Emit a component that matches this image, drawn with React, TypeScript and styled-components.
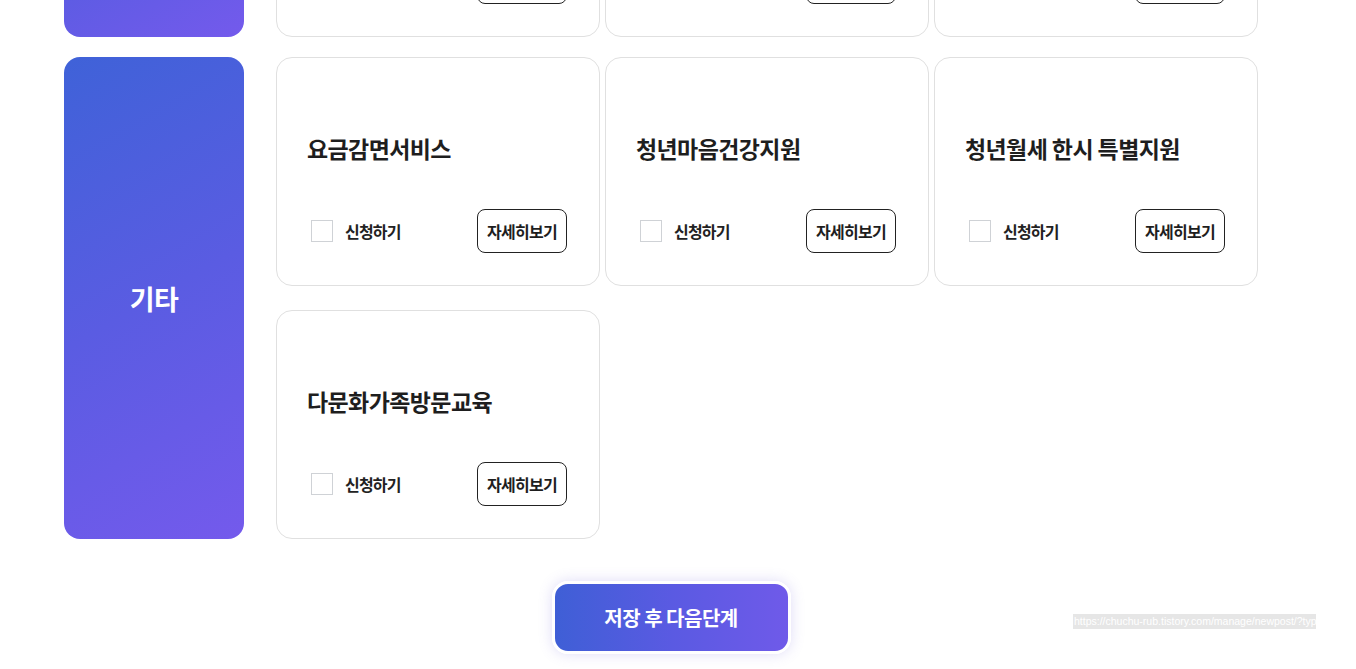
import React from "react";
import styled, { createGlobalStyle } from "styled-components";

const Global = createGlobalStyle`
  html, body { margin: 0; padding: 0; background: #ffffff; overflow: hidden; }
  body { font-family: "Noto Sans CJK KR", "Noto Sans", sans-serif; color: #222; }
  * { box-sizing: border-box; }
`;

const Page = styled.div`
  width: 1356px;
  height: 669px;
  overflow: hidden;
  position: relative;
`;

const Sections = styled.div`
  margin-top: -192px;
  padding-left: 64px;
  display: flex;
  flex-direction: column;
  gap: 20px;
`;

const Section = styled.div`
  display: flex;
  gap: 32px;
  align-items: stretch;
`;

const Category = styled.div`
  width: 180px;
  flex: none;
  border-radius: 16px;
  background: linear-gradient(150deg, #3f62d8 0%, #5a5ce2 50%, #745aec 100%);
  display: flex;
  align-items: center;
  justify-content: center;
  color: #ffffff;
  font-size: 27px;
  font-weight: 700;
  letter-spacing: -0.5px;
`;

const CardGrid = styled.div`
  display: grid;
  grid-template-columns: repeat(3, 324px);
  column-gap: 5px;
  row-gap: 24px;
  align-content: start;
`;

const Card = styled.div`
  height: 229px;
  border: 1px solid #e0e0e0;
  border-radius: 16px;
  background: #fff;
  padding: 0 32px 0 30px;
  display: flex;
  flex-direction: column;
`;

const Title = styled.div`
  margin-top: 73px;
  height: 34px;
  line-height: 34px;
  font-size: 23px;
  font-weight: 700;
  color: #1e1e1e;
  letter-spacing: -0.6px;
`;

const CardFooter = styled.div`
  margin-top: auto;
  margin-bottom: 32px;
  display: flex;
  align-items: center;
  justify-content: space-between;
`;

const CheckLabel = styled.label`
  display: flex;
  align-items: center;
  gap: 12px;
  padding-left: 4px;
  font-size: 16px;
  font-weight: 600;
  color: #222;
  letter-spacing: -0.8px;
  cursor: pointer;
`;

const Box = styled.span`
  width: 22px;
  height: 22px;
  border: 1px solid #cfd2d6;
  background: #fff;
  display: inline-block;
`;

const DetailButton = styled.button`
  width: 90px;
  height: 44px;
  border: 1px solid #222;
  border-radius: 8px;
  background: #fff;
  font-family: "Noto Sans CJK KR", "Noto Sans", sans-serif;
  font-size: 16px;
  font-weight: 600;
  color: #1e1e1e;
  letter-spacing: -0.7px;
  padding: 0;
  cursor: pointer;
`;

const ButtonRow = styled.div`
  display: flex;
  justify-content: center;
  padding-right: 14px;
  margin-top: 42px;
`;

const NextButton = styled.button`
  width: 239px;
  height: 73px;
  border: 3px solid #ffffff;
  border-radius: 16px;
  background: linear-gradient(90deg, #3f5fd6 0%, #5a5ae2 50%, #6f5ae9 100%);
  box-shadow: 0 0 14px rgba(110, 95, 220, 0.22);
  color: #fff;
  font-family: "Noto Sans CJK KR", "Noto Sans", sans-serif;
  font-size: 20px;
  font-weight: 700;
  letter-spacing: -0.5px;
  cursor: pointer;
`;

const StatusUrl = styled.div`
  position: absolute;
  left: 1073px;
  top: 614px;
  width: 243px;
  height: 15px;
  background: #e6e6e6;
  color: #ffffff;
  font-family: "Liberation Sans", Arial, sans-serif;
  font-size: 10.5px;
  line-height: 15px;
  white-space: nowrap;
  overflow: hidden;
  padding-left: 1px;
`;

type Item = { title: string };

const ServiceCard = ({ title }: Item) => (
  <Card>
    <Title>{title}</Title>
    <CardFooter>
      <CheckLabel>
        <Box />
        신청하기
      </CheckLabel>
      <DetailButton>자세히보기</DetailButton>
    </CardFooter>
  </Card>
);

const prev: Item[] = [
  { title: "청년내일저축계좌" },
  { title: "청년도약계좌" },
  { title: "청년희망적금" },
];

const etc: Item[] = [
  { title: "요금감면서비스" },
  { title: "청년마음건강지원" },
  { title: "청년월세 한시 특별지원" },
  { title: "다문화가족방문교육" },
];

export default function App() {
  return (
    <Page>
      <Global />
      <Sections>
        <Section>
          <Category>금융</Category>
          <CardGrid>
            {prev.map((p) => (
              <ServiceCard key={p.title} title={p.title} />
            ))}
          </CardGrid>
        </Section>
        <Section>
          <Category>기타</Category>
          <CardGrid>
            {etc.map((p) => (
              <ServiceCard key={p.title} title={p.title} />
            ))}
          </CardGrid>
        </Section>
      </Sections>
      <ButtonRow>
        <NextButton>저장 후 다음단계</NextButton>
      </ButtonRow>
      <StatusUrl>https://chuchu-rub.tistory.com/manage/newpost/?typ</StatusUrl>
    </Page>
  );
}
